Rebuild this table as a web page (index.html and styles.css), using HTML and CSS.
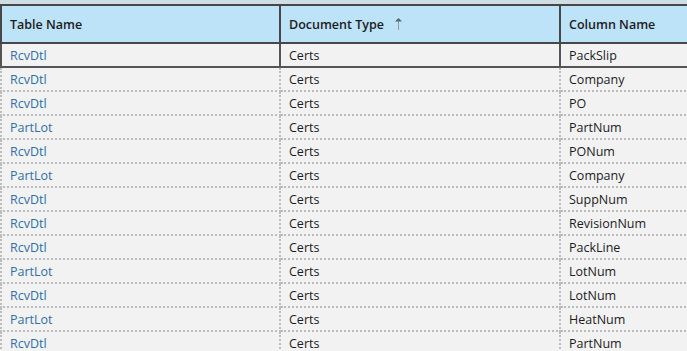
FILE: index.html
```html
<!DOCTYPE html>
<html>
<head>
<meta charset="utf-8">
<link rel="stylesheet" href="styles.css">
</head>
<body>
<div class="strip"></div>
<table class="grid">
  <colgroup>
    <col class="c1"><col class="c2"><col class="c3">
  </colgroup>
  <thead>
    <tr>
      <th>Table Name</th>
      <th><span class="hd">Document Type<svg class="sort" width="7" height="12" viewBox="0 0 7 12"><rect x="3" y="3" width="1" height="9" fill="#8d9aa0"/><polygon points="3.5,0 7,3.5 0,3.5" fill="#5b6468"/></svg></span></th>
      <th>Column Name</th>
    </tr>
  </thead>
  <tbody>
    <tr class="sel"><td class="link">RcvDtl</td><td>Certs</td><td>PackSlip</td></tr>
    <tr><td class="link">RcvDtl</td><td>Certs</td><td>Company</td></tr>
    <tr><td class="link">RcvDtl</td><td>Certs</td><td>PO</td></tr>
    <tr><td class="link">PartLot</td><td>Certs</td><td>PartNum</td></tr>
    <tr><td class="link">RcvDtl</td><td>Certs</td><td>PONum</td></tr>
    <tr><td class="link">PartLot</td><td>Certs</td><td>Company</td></tr>
    <tr><td class="link">RcvDtl</td><td>Certs</td><td>SuppNum</td></tr>
    <tr><td class="link">RcvDtl</td><td>Certs</td><td>RevisionNum</td></tr>
    <tr><td class="link">RcvDtl</td><td>Certs</td><td>PackLine</td></tr>
    <tr><td class="link">PartLot</td><td>Certs</td><td>LotNum</td></tr>
    <tr><td class="link">RcvDtl</td><td>Certs</td><td>LotNum</td></tr>
    <tr><td class="link">PartLot</td><td>Certs</td><td>HeatNum</td></tr>
    <tr><td class="link">RcvDtl</td><td>Certs</td><td>PartNum</td></tr>
  </tbody>
</table>
</body>
</html>
```
FILE: styles.css
```css
html, body {
  margin: 0;
  padding: 0;
  background: #f2f2f2;
  overflow: hidden;
}
body {
  font-family: "Open Sans", "Noto Sans", sans-serif;
  font-size: 12.5px;
  color: #1c1c1c;
}
.strip {
  height: 4px;
  background: #d0dde3;
}
.grid {
  border-collapse: collapse;
  table-layout: fixed;
  width: 687px;
}
.c1 { width: 279px; }
.c2 { width: 280px; }
.c3 { width: 128px; }
.grid th {
  height: 36px;
  padding: 0 8px;
  text-align: left;
  font-weight: 600;
  background: #bde3f8;
  border: 2px solid #474747;
  white-space: nowrap;
}
.hd {
  display: inline-flex;
  align-items: center;
  gap: 11px;
}
.sort {
  display: block;
  margin-top: 0;
}
.grid td {
  height: 22px;
  padding: 0 8px;
  border: 2px dotted #bcbcbc;
  white-space: nowrap;
  overflow: hidden;
}
.grid tr.sel td {
  border: 2px solid #555555;
}
.link {
  color: #2f6fa8;
}
```
